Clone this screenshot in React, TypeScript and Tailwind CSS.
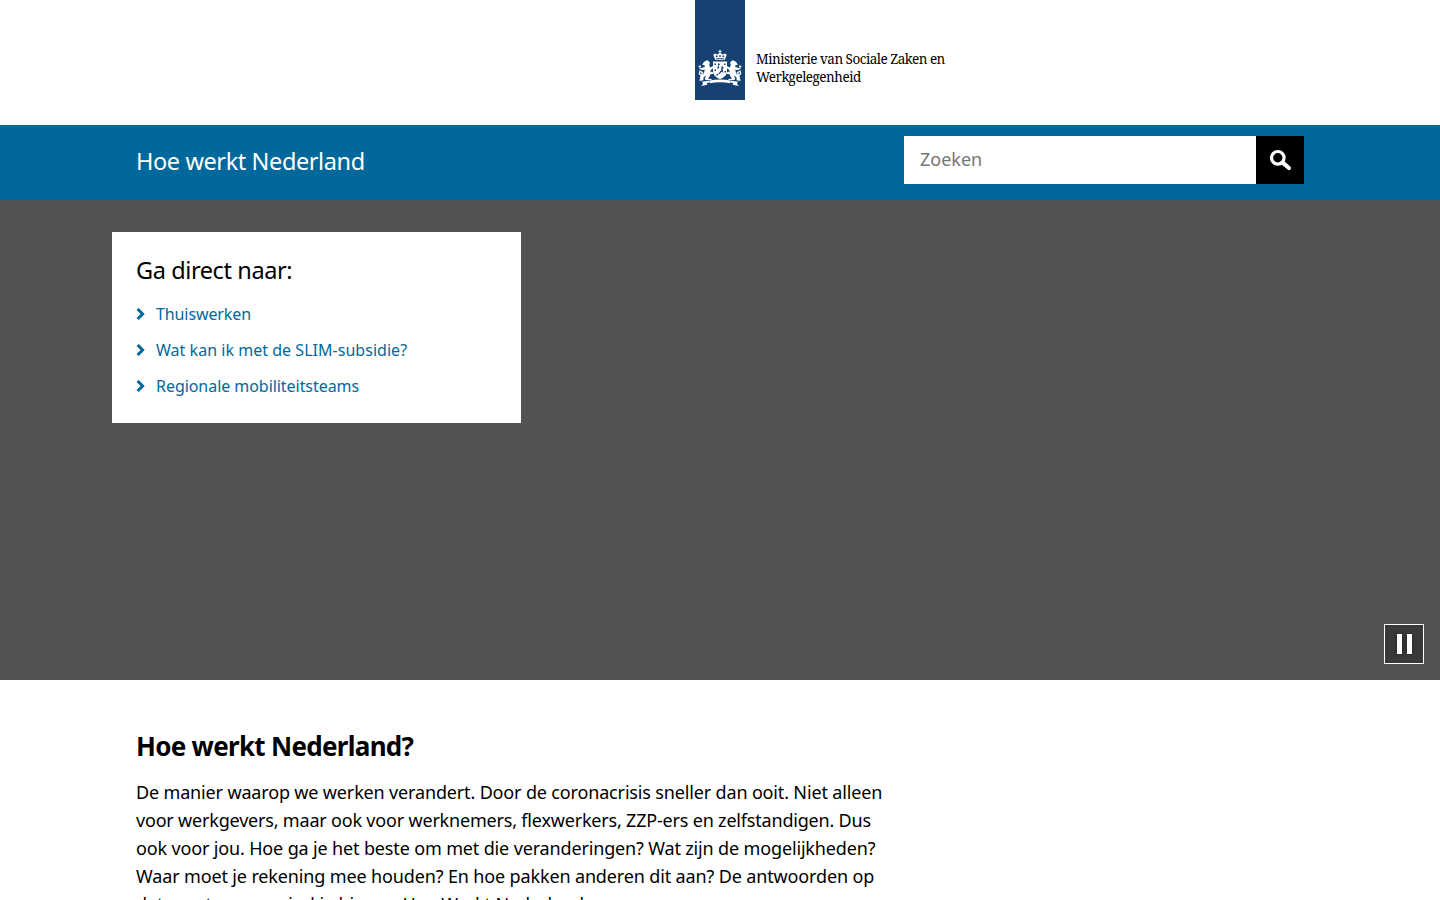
import type { ReactNode } from "react";

const links = [
  { label: "Thuiswerken", cls: "tracking-[-0.1px]" },
  { label: "Wat kan ik met de SLIM-subsidie?", cls: "tracking-[0.03px]" },
  { label: "Regionale mobiliteitsteams", cls: "tracking-[-0.05px]" },
];

function Lion() {
  return (
    <g>
      <path d="M8.5 16.5 L10 15.2 L12 14.2 L14 15.2 L15 17.5 L14 19.3 L15.5 21.5 L18.5 19.8 L19.3 21.3 L15.5 24.3 L15.2 25.6 L18 26.2 L18.5 27.7 L15.5 28.2 L14.5 30.5 L13 32.7 L16.5 33 L16.5 34 L10.5 34 L9.8 32.3 L11.3 29.4 L8.6 31.2 L8.3 34.3 L4.5 35 L4.8 33.3 L6.3 30 L9 27 L9.7 23.8 L6 24 L5.5 22.3 L9.5 21 L10 19.6 L7.2 18.8 Z" />
      <path d="M6.8 29.5 L4.4 28 L4.8 25.8 M6 20.2 L3.6 20.4 M6 22.8 L4.4 21.4 M5.4 31.8 L7.5 26.5 L4.3 24.8" fill="none" stroke="#fff" strokeWidth="1.3" />
    </g>
  );
}

function CoatOfArms() {
  return (
    <svg viewBox="0 0 50 44" className="h-[44px] w-[50px]" fill="#fff" aria-hidden="true">
      <path d="M24.5 3.8h1v1.2h1v1h-1v1.2h-1V6h-1V5h1z" />
      <path d="M18.3 8.8 L20 7.4 L22.4 8.6 L25 6.8 L27.6 8.6 L30 7.4 L31.7 8.8 L29.8 13.8 L20.2 13.8 Z" />
      <path d="M20.8 9.6h1.8v1.5h-1.8zM24.1 9.2h1.8v1.6h-1.8zM27.4 9.6h1.8v1.5h-1.8zM21 12.2h8v.7h-8z" fill="#154273" />
      <Lion />
      <g transform="translate(50 0) scale(-1 1)"><Lion /></g>
      <path d="M18 15.5 H32 V25 C32 29 29 31.5 25 33 C21 31.5 18 29 18 25 Z" />
      <path d="M19.5 17.5H21V19h-1.5zM29 17.5h1.5V19H29zM19.5 23.5H21V25h-1.5zM29.5 25H31v1.5h-1.5zM21.5 28H23v1.5h-1.5zM23 17l2 1.2-1.5 1.5 .8 2.4-2 .8 .6-3zM26.8 19.8l1.8 1.7-1 2.5 .8 2.8-2-1-1.4 2-2 .4 2-2.8 1.2-1.4z" fill="#154273" />
      <path d="M14.5 34.4 C21 33.3 29 33.3 35.5 34.4 L35.5 37.2 C29 36 21 36 14.5 37.2 Z" />
      <path d="M7 35.8 L14.5 34.6 L14 36.6 L11.8 37 L12.3 38.8 L6.2 40 L8 37.8 Z M43 35.8 L35.5 34.6 L36 36.6 L38.2 37 L37.7 38.8 L43.8 40 L42 37.8 Z" />
    </svg>
  );
}

function Line({ children, className }: { children: ReactNode; className: string }) {
  return <span className={`block whitespace-nowrap ${className}`}>{children}</span>;
}

export default function App() {
  return (
    <div className="h-[900px] overflow-hidden bg-white font-['Noto_Sans',sans-serif] text-black">
      <header className="flex h-[125px] items-start pl-[695px]">
        <div className="flex h-[100px] w-[50px] items-start bg-[#154273] pt-[46px]">
          <CoatOfArms />
        </div>
        <div className="pl-[11px] pt-[51px] font-['Noto_Serif','Liberation_Serif',serif] text-[13.5px] leading-[17.5px]">
          <Line className="tracking-[-0.5px]">Ministerie van Sociale Zaken en</Line>
          <Line className="tracking-[-0.48px]">Werkgelegenheid</Line>
        </div>
      </header>

      <div className="flex h-[75px] items-start justify-between bg-[#01689b] pl-[136px] pr-[136px]">
        <div className="pt-[18px] text-[23.5px] leading-[36px] tracking-[-0.4px] text-white">Hoe werkt Nederland</div>
        <form className="mt-[11px] flex h-12 w-[400px]">
          <input
            type="text"
            placeholder="Zoeken"
            className="h-12 w-[352px] bg-white px-4 pb-[3px] text-[18px] outline-none placeholder:text-[#757575]"
          />
          <button type="button" aria-label="Zoek" className="flex h-12 w-12 items-center justify-center bg-black">
            <svg viewBox="0 0 48 48" className="h-12 w-12" fill="none" stroke="#fff">
              <circle cx="21.8" cy="21.8" r="6.3" strokeWidth="3.2" />
              <path d="M26.6 26.6 L33 32" strokeWidth="4.2" strokeLinecap="round" />
            </svg>
          </button>
        </form>
      </div>

      <section className="flex h-[480px] items-start justify-between bg-[#535353] pl-[112px] pr-4 pt-8">
        <div className="h-[191px] w-[409px] bg-white px-6 pt-5">
          <h2 className="text-[23.5px] leading-[36px] tracking-[-0.4px]">Ga direct naar:</h2>
          <ul className="pt-2">
            {links.map((l) => (
              <li key={l.label} className="flex h-9 items-center text-[16px] text-[#01689b]">
                <svg viewBox="0 0 9 12" className="mb-px mr-[11px] h-3 w-[9px]" fill="none" stroke="#01689b" strokeWidth="3">
                  <path d="M1.6 1 L6.6 6 L1.6 11" />
                </svg>
                <a className={l.cls}>{l.label}</a>
              </li>
            ))}
          </ul>
        </div>
        <button type="button" aria-label="Pauzeer" className="mt-[392px] flex h-10 w-10 items-center justify-center gap-[5px] border border-white bg-[#3a3a3a]">
          <span className="mb-px h-5 w-[5px] bg-white shadow-[0_0_5px_rgba(0,0,0,0.4)]" />
          <span className="mb-px h-5 w-[5px] bg-white shadow-[0_0_5px_rgba(0,0,0,0.4)]" />
        </button>
      </section>

      <main className="pl-[136px] pt-12">
        <h1 className="text-[26px] font-bold leading-[36px] tracking-[-0.7px]">Hoe werkt Nederland?</h1>
        <p className="pt-[14px] text-[18px] leading-[28px]">
          <Line className="tracking-[-0.155px]">De manier waarop we werken verandert. Door de coronacrisis sneller dan ooit. Niet alleen</Line>
          <Line className="tracking-[-0.19px]">voor werkgevers, maar ook voor werknemers, flexwerkers, ZZP-ers en zelfstandigen. Dus</Line>
          <Line className="tracking-[-0.15px]">ook voor jou. Hoe ga je het beste om met die veranderingen? Wat zijn de mogelijkheden?</Line>
          <Line className="tracking-[-0.14px]">Waar moet je rekening mee houden? En hoe pakken anderen dit aan? De antwoorden op</Line>
          <Line className="tracking-[-0.09px]">dat soort vragen vind je hier op Hoe Werkt Nederland.</Line>
        </p>
      </main>
    </div>
  );
}
